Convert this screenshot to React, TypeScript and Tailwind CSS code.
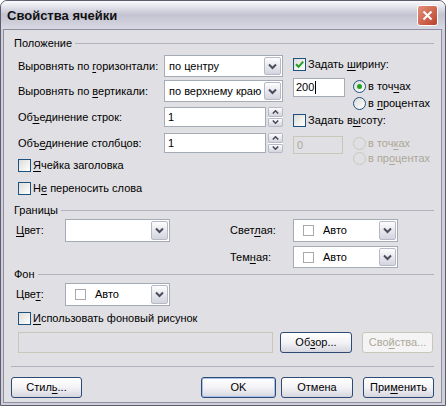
import type { ReactNode } from 'react'
import clsx from 'clsx'

function U({ children }: { children: ReactNode }) {
  return <span className="underline underline-offset-[2px]">{children}</span>
}

function Check({ checked = false }: { checked?: boolean }) {
  return (
    <span className="flex h-[13px] w-[13px] shrink-0 items-center justify-center border border-[#1c5180] bg-gradient-to-br from-[#dcdcd7] to-white">
      {checked && (
        <svg width="9" height="9" viewBox="0 0 9 9">
          <path d="M1 4.2l2.6 2.6L8.2 1.6" stroke="#21a121" strokeWidth="2" fill="none" />
        </svg>
      )}
    </span>
  )
}

function Radio({ on = false, disabled = false }: { on?: boolean; disabled?: boolean }) {
  return (
    <span
      className={clsx(
        'flex h-[13px] w-[13px] shrink-0 items-center justify-center rounded-full border',
        disabled ? 'border-[#cac8bb] bg-[#e0dfe3]' : 'border-[#1c5180] bg-gradient-to-br from-[#dcdcd7] to-white',
      )}
    >
      {on && <span className="h-[5px] w-[5px] rounded-full bg-[#21a121]" />}
    </span>
  )
}

function DropBtn() {
  return (
    <span className="flex h-full w-[17px] shrink-0 items-center justify-center rounded-[2px] border border-[#b7b9c9] bg-gradient-to-b from-[#fdfdfe] to-[#d3d4de]">
      <svg width="9" height="7" viewBox="0 0 9 7">
        <path d="M1 1.5l3.5 3.5L8 1.5" stroke="#4c4c5a" strokeWidth="2" fill="none" />
      </svg>
    </span>
  )
}

function Select({ className, children }: { className: string; children?: ReactNode }) {
  return (
    <div className={clsx('flex shrink-0 items-center border border-[#a5acb5] bg-white p-[1px]', className)}>
      <div className="flex flex-1 items-center overflow-hidden whitespace-nowrap pl-[3px]">{children}</div>
      <DropBtn />
    </div>
  )
}

function Auto() {
  return (
    <div className="flex items-center pl-[5px]">
      <span className="h-[11px] w-[11px] border border-[#a9a9a9] bg-white" />
      <span className="ml-[9px]">Авто</span>
    </div>
  )
}

function SpinBtn({ up = false }: { up?: boolean }) {
  return (
    <span className="flex flex-1 items-center justify-center rounded-[1px] border border-[#b7b9c9] bg-gradient-to-b from-[#fdfdfe] to-[#d3d4de]">
      <svg width="7" height="4" viewBox="0 0 7 4">
        <path d={up ? 'M0.8 3.5L3.5 0.8L6.2 3.5' : 'M0.8 0.5L3.5 3.2L6.2 0.5'} stroke="#4c4c5a" strokeWidth="1.6" fill="none" />
      </svg>
    </span>
  )
}

function Spin({ value }: { value: string }) {
  return (
    <div className="flex h-[20px] w-[119px] shrink-0 gap-[2px]">
      <div className="flex flex-1 items-center border border-[#a5acb5] bg-white pl-[3px]">{value}</div>
      <div className="flex w-[15px] flex-col gap-[1px] bg-white">
        <SpinBtn up />
        <SpinBtn />
      </div>
    </div>
  )
}

function Btn({ className, children, disabled = false, def = false }: { className: string; children: ReactNode; disabled?: boolean; def?: boolean }) {
  return (
    <div
      className={clsx(
        'flex h-[21px] shrink-0 items-center justify-center rounded-[3px] border',
        disabled
          ? 'border-[#c9c7ba] bg-[#f4f4f4] text-[#aca899]'
          : 'border-[#2c4a73] bg-gradient-to-b from-white via-[#f3f3f6] to-[#d6d6e0]',
        def && 'shadow-[inset_0_0_0_1px_#a8c0ec]',
        className,
      )}
    >
      {children}
    </div>
  )
}

function Header({ children }: { children: ReactNode }) {
  return (
    <div className="flex h-[12px] items-center gap-[3px] pl-[3px]">
      <span className="whitespace-nowrap">{children}</span>
      <span className="h-px flex-1 bg-[#b2b2bc]" />
    </div>
  )
}

function LeftRow({ label, children }: { label: ReactNode; children: ReactNode }) {
  return (
    <div className="flex items-center">
      <span className="w-[146px] shrink-0 whitespace-nowrap">{label}</span>
      {children}
    </div>
  )
}

function CheckRow({ label, checked = false }: { label: ReactNode; checked?: boolean }) {
  return (
    <div className="flex h-[13px] items-center gap-[2px]">
      <Check checked={checked} />
      <span className="whitespace-nowrap">{label}</span>
    </div>
  )
}

function RadioRow({ label, on = false, disabled = false, className }: { label: ReactNode; on?: boolean; disabled?: boolean; className: string }) {
  return (
    <div className={clsx('flex h-[13px] items-center gap-[2px]', disabled && 'text-[#aca899]', className)}>
      <Radio on={on} disabled={disabled} />
      <span className="whitespace-nowrap">{label}</span>
    </div>
  )
}

export default function App() {
  return (
    <div className="h-[406px] w-[446px] bg-white font-['Liberation_Sans',Arial,sans-serif] text-[11px] leading-none text-black">
      <div className="flex h-full w-full flex-col rounded-t-[7px] border border-[#5d5d6e] bg-[#cfcfdc]">
        <div className="flex h-[28px] shrink-0 items-center justify-between rounded-t-[6px] bg-gradient-to-b from-[#fbfbfd] via-[#c3c3d2] to-[#d9d9e3] pl-[6px] pr-[7px]">
          <span className="text-[13px] font-bold text-[#111]">Свойства ячейки</span>
          <div className="flex h-[21px] w-[21px] items-center justify-center rounded-[3px] border border-white bg-gradient-to-br from-[#e3907a] to-[#bb3f29]">
            <svg width="11" height="11" viewBox="0 0 11 11">
              <path d="M1.5 1.5l8 8M9.5 1.5l-8 8" stroke="white" strokeWidth="2" />
            </svg>
          </div>
        </div>

        <div className="mb-[2px] ml-[2px] mr-[3px] flex flex-1 flex-col border border-[#8e8f9e] bg-[#e0dfe3] px-[7px]">
          <div className="mt-[7px]">
            <Header>Положение</Header>
          </div>

          <div className="mt-[6px] flex">
            <div className="ml-[7px] flex w-[265px] flex-col">
              <LeftRow label={<>Выровнять по <U>г</U>оризонтали:</>}>
                <Select className="h-[22px] w-[119px]">по центру</Select>
              </LeftRow>
              <div className="mt-[3px]">
                <LeftRow label={<>Выровнять по <U>в</U>ертикали:</>}>
                  <Select className="h-[22px] w-[119px]">по верхнему краю</Select>
                </LeftRow>
              </div>
              <div className="mt-[5px]">
                <LeftRow label={<>Об<U>ъ</U>единение строк:</>}>
                  <Spin value="1" />
                </LeftRow>
              </div>
              <div className="mt-[6px]">
                <LeftRow label={<>Объ<U>е</U>динение столбцов:</>}>
                  <Spin value="1" />
                </LeftRow>
              </div>
              <div className="mt-[6px]">
                <CheckRow label={<><U>Я</U>чейка заголовка</>} />
              </div>
              <div className="mt-[10px]">
                <CheckRow label={<>Н<U>е</U> переносить слова</>} />
              </div>
            </div>

            <div className="ml-[10px] flex w-[140px] flex-col">
              <div className="mt-[3px]">
                <CheckRow checked label={<>Задать <U>ш</U>ирину:</>} />
              </div>
              <div className="mt-[7px] flex items-start">
                <div className="flex h-[19px] w-[52px] items-center border border-[#a5acb5] bg-white pl-[2px]">
                  200<span className="ml-[1px] h-[13px] w-px bg-black" />
                </div>
                <div className="ml-[8px] flex flex-col">
                  <RadioRow on className="mt-[2px]" label={<>в точ<U>ч</U>ах</>} />
                  <RadioRow className="mt-[4px]" label={<>в <U>п</U>роцентах</>} />
                </div>
              </div>
              <div className="mt-[4px]">
                <CheckRow label={<>Задать в<U>ы</U>соту:</>} />
              </div>
              <div className="mt-[9px] flex items-start">
                <div className="flex h-[18px] w-[50px] items-center border border-[#c9c7ba] bg-[#e0dfe3] pl-[3px] text-[#aca899]">0</div>
                <div className="ml-[10px] flex flex-col">
                  <RadioRow disabled className="mt-[1px]" label={<>в точ<U>к</U>ах</>} />
                  <RadioRow disabled className="mt-[2px]" label={<>в пр<U>о</U>центах</>} />
                </div>
              </div>
            </div>
          </div>

          <div className="mt-[9px]">
            <Header>Границы</Header>
          </div>
          <div className="mt-[3px] flex items-center">
            <span className="ml-[5px] w-[49px] shrink-0"><U>Ц</U>вет:</span>
            <Select className="h-[23px] w-[105px]" />
            <span className="ml-[60px] w-[63px] shrink-0">Свет<U>л</U>ая:</span>
            <Select className="h-[23px] w-[105px]"><Auto /></Select>
          </div>
          <div className="mt-[4px] flex items-center">
            <span className="ml-[219px] w-[63px] shrink-0">Тем<U>н</U>ая:</span>
            <Select className="h-[22px] w-[105px]"><Auto /></Select>
          </div>

          <div className="mt-0">
            <Header>Фон</Header>
          </div>
          <div className="mt-[3px] flex items-center">
            <span className="ml-[5px] w-[49px] shrink-0">Цве<U>т</U>:</span>
            <Select className="h-[23px] w-[105px]"><Auto /></Select>
          </div>
          <div className="ml-[7px] mt-[6px]">
            <CheckRow label={<><U>И</U>спользовать фоновый рисунок</>} />
          </div>
          <div className="ml-[7px] mt-[7px] flex items-center">
            <div className="h-[21px] w-[255px] shrink-0 border border-[#c9c7ba] bg-[#e0dfe3]" />
            <Btn className="ml-[7px] w-[72px]">Об<U>з</U>ор...</Btn>
            <Btn disabled className="ml-[10px] w-[71px]">Сво<U>й</U>ства...</Btn>
          </div>

          <div className="mt-[13px] h-[2px] border-t border-[#b2b2bc] border-b-white" />

          <div className="mt-[9px] flex items-center">
            <Btn className="w-[71px]">Стил<U>ь</U>...</Btn>
            <span className="flex-1" />
            <Btn def className="w-[75px]">OK</Btn>
            <Btn className="ml-[5px] w-[72px]">Отмена</Btn>
            <Btn className="ml-[10px] w-[71px]">При<U>м</U>енить</Btn>
          </div>
        </div>
      </div>
    </div>
  )
}
